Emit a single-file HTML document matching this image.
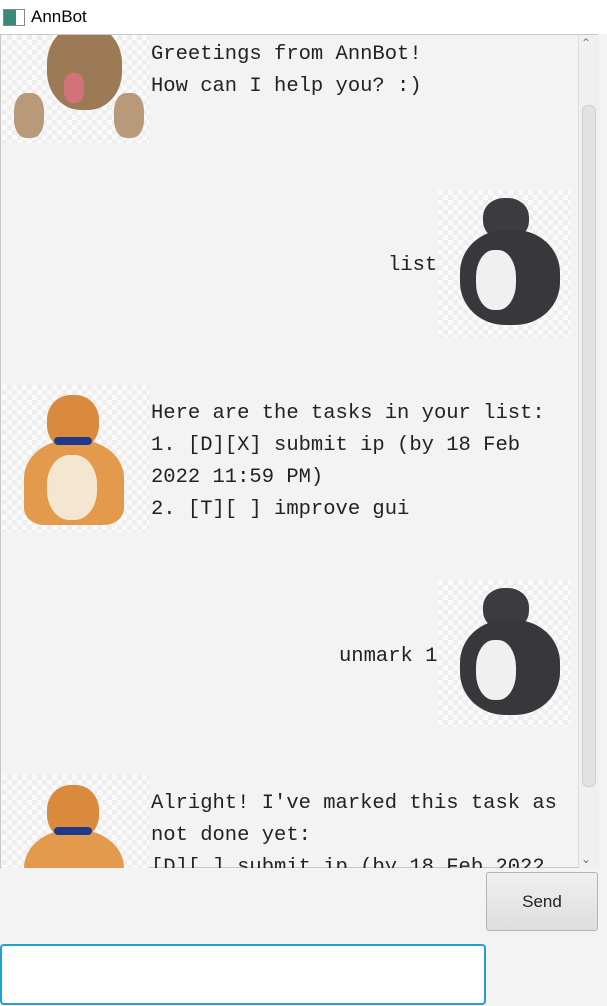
<!DOCTYPE html>
<html><head><style>
body{margin:0;width:607px;height:1006px;background:#f3f3f3;position:relative;overflow:hidden;font-family:"Liberation Sans",sans-serif}
.t{position:absolute;font-family:"Liberation Mono","DejaVu Sans Mono",monospace;font-size:20.5px;color:#222;white-space:pre;line-height:32px}
.img{position:absolute;background-color:#fafafa;background-image:linear-gradient(45deg,#eee 25%,transparent 25%,transparent 75%,#eee 75%),linear-gradient(45deg,#eee 25%,transparent 25%,transparent 75%,#eee 75%);background-size:10px 10px;background-position:0 0,5px 5px;overflow:hidden}
.a{position:absolute}
</style></head><body>
<div class="a" style="left:0;top:0;width:607px;height:34px;background:#fff"></div>
<div class="a" style="left:3px;top:9px;width:20px;height:15px;border:1px solid #888;background:linear-gradient(90deg,#3a8a7a 60%,#fff 60%)"></div>
<div class="a" style="left:31px;top:7px;font-size:17px;color:#000">AnnBot</div>
<div class="a" style="left:0;top:34px;width:598px;height:834px;border:1px solid #c8c8c8;border-right:none;box-sizing:border-box;overflow:hidden">
</div>
<div class="a" style="left:578px;top:35px;width:20px;height:833px;background:#f0f0f0;border-left:1px solid #ddd"></div>
<div class="a" style="left:582px;top:105px;width:12px;height:680px;background:#e2e2e2;border:1px solid #cfcfcf;border-radius:6px"></div>
<div class="a" style="left:581px;top:36px;font-size:12px;color:#777">&#8963;</div>
<div class="a" style="left:581px;top:852px;font-size:12px;color:#777">&#8964;</div>

<div class="img" style="left:2px;top:35px;width:147px;height:108px">
<div class="a" style="left:45px;top:-10px;width:75px;height:85px;background:#9c7a55;border-radius:45%"></div>
<div class="a" style="left:62px;top:38px;width:20px;height:30px;background:#d2737b;border-radius:40%"></div>
<div class="a" style="left:12px;top:58px;width:30px;height:45px;background:#b89a7a;border-radius:40%"></div>
<div class="a" style="left:112px;top:58px;width:30px;height:45px;background:#b89a7a;border-radius:40%"></div>
</div>
<div class="t" style="left:151px;top:39px">Greetings from AnnBot!
How can I help you? :)</div>

<div class="img" style="left:438px;top:190px;width:133px;height:147px">
<div class="a" style="left:45px;top:8px;width:46px;height:42px;background:#3c3c40;border-radius:45%"></div>
<div class="a" style="left:22px;top:40px;width:100px;height:95px;background:#38383c;border-radius:45%"></div>
<div class="a" style="left:38px;top:60px;width:40px;height:60px;background:#f0f0f0;border-radius:45%"></div>
</div>
<div class="t" style="left:388px;top:250px">list</div>

<div class="img" style="left:2px;top:385px;width:147px;height:147px">
<div class="a" style="left:45px;top:10px;width:52px;height:55px;background:#d98a3c;border-radius:45%"></div>
<div class="a" style="left:22px;top:55px;width:100px;height:85px;background:#e39a4c;border-radius:45% 45% 20% 20%"></div>
<div class="a" style="left:45px;top:70px;width:50px;height:65px;background:#f5e6d2;border-radius:45%"></div>
<div class="a" style="left:52px;top:52px;width:38px;height:8px;background:#1f3a8a;border-radius:4px"></div>
</div>
<div class="t" style="left:151px;top:398px">Here are the tasks in your list:
1. [D][X] submit ip (by 18 Feb
2022 11:59 PM)
2. [T][ ] improve gui</div>

<div class="img" style="left:438px;top:580px;width:133px;height:147px">
<div class="a" style="left:45px;top:8px;width:46px;height:42px;background:#3c3c40;border-radius:45%"></div>
<div class="a" style="left:22px;top:40px;width:100px;height:95px;background:#38383c;border-radius:45%"></div>
<div class="a" style="left:38px;top:60px;width:40px;height:60px;background:#f0f0f0;border-radius:45%"></div>
</div>
<div class="t" style="left:339px;top:641px">unmark 1</div>

<div class="img" style="left:2px;top:775px;width:147px;height:93px">
<div class="a" style="left:45px;top:10px;width:52px;height:55px;background:#d98a3c;border-radius:45%"></div>
<div class="a" style="left:22px;top:55px;width:100px;height:85px;background:#e39a4c;border-radius:45% 45% 20% 20%"></div>
<div class="a" style="left:52px;top:52px;width:38px;height:8px;background:#1f3a8a;border-radius:4px"></div>
</div>
<div class="a" style="left:150px;top:775px;width:428px;height:93px;overflow:hidden">
<div class="t" style="left:1px;top:13px">Alright! I've marked this task as
not done yet:
[D][ ] submit ip (by 18 Feb 2022</div></div>

<div class="a" style="left:486px;top:872px;width:112px;height:59px;box-sizing:border-box;border:1px solid #b5b5b5;border-radius:3px;background:linear-gradient(#f0f0f0,#dedede);font-size:17px;color:#222;text-align:center;line-height:57px">Send</div>
<div class="a" style="left:0;top:944px;width:486px;height:61px;box-sizing:border-box;border:2px solid #1ea0d8;border-radius:4px;background:#fff"></div>
</body></html>
